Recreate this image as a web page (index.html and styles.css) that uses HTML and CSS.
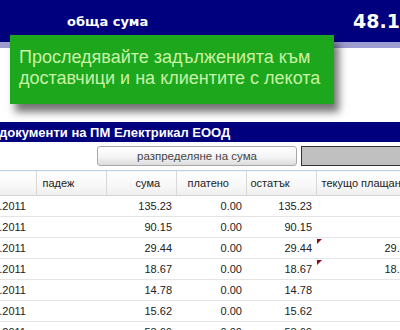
FILE: index.html
```html
<!DOCTYPE html>
<html lang="bg">
<head>
<meta charset="utf-8">
<link rel="stylesheet" href="styles.css">
</head>
<body>
<div class="page">
  <header class="topbar">
    <span class="top-label">обща сума</span>
    <span class="top-total">48.11</span>
  </header>
  <div class="stripe"></div>
  <div class="callout">Проследявайте задълженията към<br>доставчици и на клиентите с лекота</div>
  <div class="gap"></div>
  <div class="docbar"><span class="doc-title">документи на ПМ Електрикал ЕООД</span></div>
  <div class="toolbar">
    <button class="btn">разпределяне на сума</button>
    <div class="graybox"></div>
  </div>
  <table class="grid">
    <colgroup>
      <col class="c-date"><col class="c-num"><col class="c-num"><col class="c-num"><col class="c-num"><col class="c-cur">
    </colgroup>
    <thead>
      <tr>
        <th></th>
        <th class="h-due">падеж</th>
        <th class="h-sum">сума</th>
        <th class="h-paid">платено</th>
        <th class="h-rest">остатък</th>
        <th class="h-cur">текущо плащане</th>
      </tr>
    </thead>
    <tbody>
      <tr><td><div class="clip"><span>15.02.2011</span></div></td><td></td><td class="n">135.23</td><td class="n">0.00</td><td class="n">135.23</td><td class="n"></td></tr>
      <tr><td><div class="clip"><span>18.02.2011</span></div></td><td></td><td class="n">90.15</td><td class="n">0.00</td><td class="n">90.15</td><td class="n"></td></tr>
      <tr><td><div class="clip"><span>22.02.2011</span></div></td><td></td><td class="n">29.44</td><td class="n">0.00</td><td class="n">29.44</td><td class="n mark">29.44</td></tr>
      <tr><td><div class="clip"><span>25.02.2011</span></div></td><td></td><td class="n">18.67</td><td class="n">0.00</td><td class="n">18.67</td><td class="n mark">18.67</td></tr>
      <tr><td><div class="clip"><span>01.03.2011</span></div></td><td></td><td class="n">14.78</td><td class="n">0.00</td><td class="n">14.78</td><td class="n"></td></tr>
      <tr><td><div class="clip"><span>04.03.2011</span></div></td><td></td><td class="n">15.62</td><td class="n">0.00</td><td class="n">15.62</td><td class="n"></td></tr>
      <tr><td><div class="clip"><span>08.03.2011</span></div></td><td></td><td class="n">58.69</td><td class="n">0.00</td><td class="n">58.69</td><td class="n"></td></tr>
    </tbody>
  </table>
</div>
</body>
</html>
```

FILE: styles.css
```css
html, body {
  margin: 0;
  padding: 0;
  background: #ffffff;
}
body {
  width: 400px;
  height: 330px;
  overflow: hidden;
  font-family: "Liberation Sans", Arial, sans-serif;
}
.page {
  position: relative;
  width: 400px;
}
.topbar {
  height: 42px;
  background: #00007f;
  display: flex;
  align-items: center;
  color: #ffffff;
  font-family: "DejaVu Sans", Verdana, sans-serif;
  font-weight: bold;
  white-space: nowrap;
  overflow: hidden;
}
.top-label {
  margin-left: 67px;
  font-size: 13px;
  width: 286px;
  flex: none;
}
.top-total {
  font-size: 19px;
  flex: none;
}
.stripe {
  height: 6px;
  background: #9d9dcf;
}
.callout {
  position: absolute;
  left: 10px;
  top: 35px;
  width: 315px;
  height: 57px;
  padding: 12px 0 0 9px;
  background: #1ca71c;
  color: #c9f2a6;
  font-size: 18px;
  line-height: 21px;
  white-space: nowrap;
  box-shadow: 5px 8px 8px rgba(0, 0, 0, 0.55);
}
.gap {
  height: 74px;
}
.docbar {
  height: 20px;
  background: #00007f;
  color: #ffffff;
  display: flex;
  align-items: center;
  overflow: hidden;
  white-space: nowrap;
}
.doc-title {
  margin-left: -1px;
  font-family: "Liberation Sans", Arial, sans-serif;
  font-weight: bold;
  font-size: 13px;
}
.toolbar {
  height: 28px;
  display: flex;
  align-items: flex-start;
  padding-top: 4px;
  box-sizing: border-box;
}
.btn {
  margin: 0 0 0 97px;
  width: 200px;
  height: 20px;
  padding: 0;
  border: 1px solid #a9a9a9;
  border-radius: 3px;
  background: linear-gradient(#ffffff 0%, #f4f4f4 55%, #dcdcdc 100%);
  color: #444444;
  font-family: "Liberation Sans", Arial, sans-serif;
  font-size: 11.5px;
}
.graybox {
  margin-left: 4px;
  flex: 1;
  height: 20px;
  box-sizing: border-box;
  border: 1px solid #333333;
  border-right: none;
  background: #c0c0c0;
}
.grid {
  border-collapse: collapse;
  table-layout: fixed;
  width: 416px;
  font-size: 11px;
  color: #222222;
}
.c-date { width: 36px; }
.c-num { width: 70px; }
.c-cur { width: 100px; }
.grid th {
  height: 24px;
  padding: 0;
  font-weight: normal;
  text-align: left;
  white-space: nowrap;
  overflow: hidden;
  border-top: 1px solid #b9d0e6;
  border-bottom: 1px solid #d4d4d4;
  border-left: 1px solid #d8d8d8;
  background: linear-gradient(#ffffff 0%, #f7f7f7 60%, #eeeeee 100%);
}
.grid th:first-child { border-left: none; }
.h-due { padding-left: 6px !important; }
.h-sum { padding-left: 29px !important; }
.h-paid { padding-left: 11px !important; }
.h-rest { padding-left: 4px !important; }
.h-cur { padding-left: 5px !important; }
.grid td {
  height: 20px;
  padding: 0;
  border-bottom: 1px solid #e4e4e4;
  white-space: nowrap;
  overflow: hidden;
}
.grid td.n {
  text-align: right;
  padding-right: 4px;
}
.clip {
  display: flex;
  justify-content: flex-end;
  overflow: hidden;
  padding-right: 10px;
}
.clip span { flex: none; }
.mark {
  position: relative;
}
.mark::before {
  content: "";
  position: absolute;
  left: 1px;
  top: 1px;
  border-top: 5px solid #8b0a14;
  border-right: 5px solid transparent;
}
```
